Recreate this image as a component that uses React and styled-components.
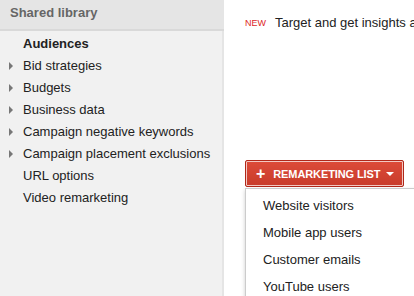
import React from "react";
import styled, { createGlobalStyle } from "styled-components";

const Global = createGlobalStyle`
  html, body {
    margin: 0;
    padding: 0;
    background: #fff;
  }
  body {
    font-family: Arial, "Liberation Sans", sans-serif;
    font-size: 13px;
    color: #222;
  }
`;

const sideItems = [
  { label: "Bid strategies", arrow: true },
  { label: "Budgets", arrow: true },
  { label: "Business data", arrow: true },
  { label: "Campaign negative keywords", arrow: true },
  { label: "Campaign placement exclusions", arrow: true },
  { label: "URL options" },
  { label: "Video remarketing" },
];

const menuItems = [
  "Website visitors",
  "Mobile app users",
  "Customer emails",
  "YouTube users",
];

export default function App() {
  return (
    <Page>
      <Global />
      <Sidebar>
        <SideHeader>Shared library</SideHeader>
        <SideList>
          <SideItem $active>Audiences</SideItem>
          {sideItems.map((it) => (
            <SideItem key={it.label}>
              {it.arrow && <Arrow />}
              {it.label}
            </SideItem>
          ))}
        </SideList>
      </Sidebar>
      <Main>
        <Promo>
          <NewTag>NEW</NewTag>
          Target and get insights about your audiences
        </Promo>
        <ButtonWrap>
          <RedButton>
            <Plus>+</Plus>
            REMARKETING LIST
            <Caret />
          </RedButton>
          <Menu>
            {menuItems.map((m) => (
              <MenuItem key={m}>{m}</MenuItem>
            ))}
          </Menu>
        </ButtonWrap>
      </Main>
    </Page>
  );
}

const Page = styled.div`
  display: flex;
  width: 414px;
  height: 296px;
  overflow: hidden;
`;

const Sidebar = styled.aside`
  width: 222px;
  flex-shrink: 0;
  background: #f1f1f1;
  border-right: 2px solid #e5e5e5;
  display: flex;
  flex-direction: column;
`;

const SideHeader = styled.div`
  height: 31px;
  box-sizing: border-box;
  padding: 5px 0 0 10px;
  background: #e5e5e5;
  border-bottom: 2px solid #d9d9d9;
  color: #666;
  font-weight: bold;
  font-size: 13px;
  line-height: 15px;
  margin-right: -2px;
`;

const SideList = styled.ul`
  list-style: none;
  margin: 0;
  padding: 2px 0 0;
`;

const SideItem = styled.li`
  position: relative;
  height: 22px;
  line-height: 22px;
  padding-left: 23px;
  font-size: 13px;
  color: #222;
  font-weight: ${(p) => (p.$active ? "bold" : "normal")};
  white-space: nowrap;
`;

const Arrow = styled.span`
  position: absolute;
  left: 9px;
  top: 7px;
  width: 0;
  height: 0;
  border-top: 4px solid transparent;
  border-bottom: 4px solid transparent;
  border-left: 4px solid #777;
`;

const Main = styled.main`
  flex: 1;
  display: flex;
  flex-direction: column;
  padding: 14px 0 0 21px;
  min-width: 0;
  overflow: hidden;
`;

const Promo = styled.div`
  white-space: nowrap;
  font-size: 13px;
  line-height: 18px;
  color: #222;
`;

const NewTag = styled.span`
  color: #dd1f26;
  font-size: 9px;
  margin-right: 9px;
  vertical-align: 1px;
`;

const ButtonWrap = styled.div`
  margin-top: 128px;
`;

const RedButton = styled.button`
  display: inline-flex;
  align-items: center;
  height: 27px;
  box-sizing: border-box;
  padding: 0 9px 0 10px;
  border: 1px solid #b0281a;
  box-shadow: inset 0 0 0 1px #f3c9c3;
  border-radius: 2px;
  background: linear-gradient(#dd4b39, #c83c2b);
  color: #fff;
  font-family: Arial, "Liberation Sans", sans-serif;
  font-size: 11px;
  font-weight: bold;
  letter-spacing: -0.1px;
  cursor: pointer;
`;

const Plus = styled.span`
  font-size: 16px;
  font-weight: bold;
  margin-right: 8px;
  line-height: 1;
`;

const Caret = styled.span`
  margin-left: 6px;
  width: 0;
  height: 0;
  border-left: 4px solid transparent;
  border-right: 4px solid transparent;
  border-top: 4px solid #fff;
`;

const Menu = styled.ul`
  list-style: none;
  margin: 1px 0 0;
  padding: 3px 0 0;
  background: #fff;
  border-left: 1px solid #ccc;
  border-top: 1px solid #ccc;
  box-shadow: 0 2px 4px rgba(0, 0, 0, 0.2);
  width: 200px;
`;

const MenuItem = styled.li`
  height: 27px;
  line-height: 27px;
  padding-left: 17px;
  font-size: 13px;
  color: #222;
  white-space: nowrap;
`;
